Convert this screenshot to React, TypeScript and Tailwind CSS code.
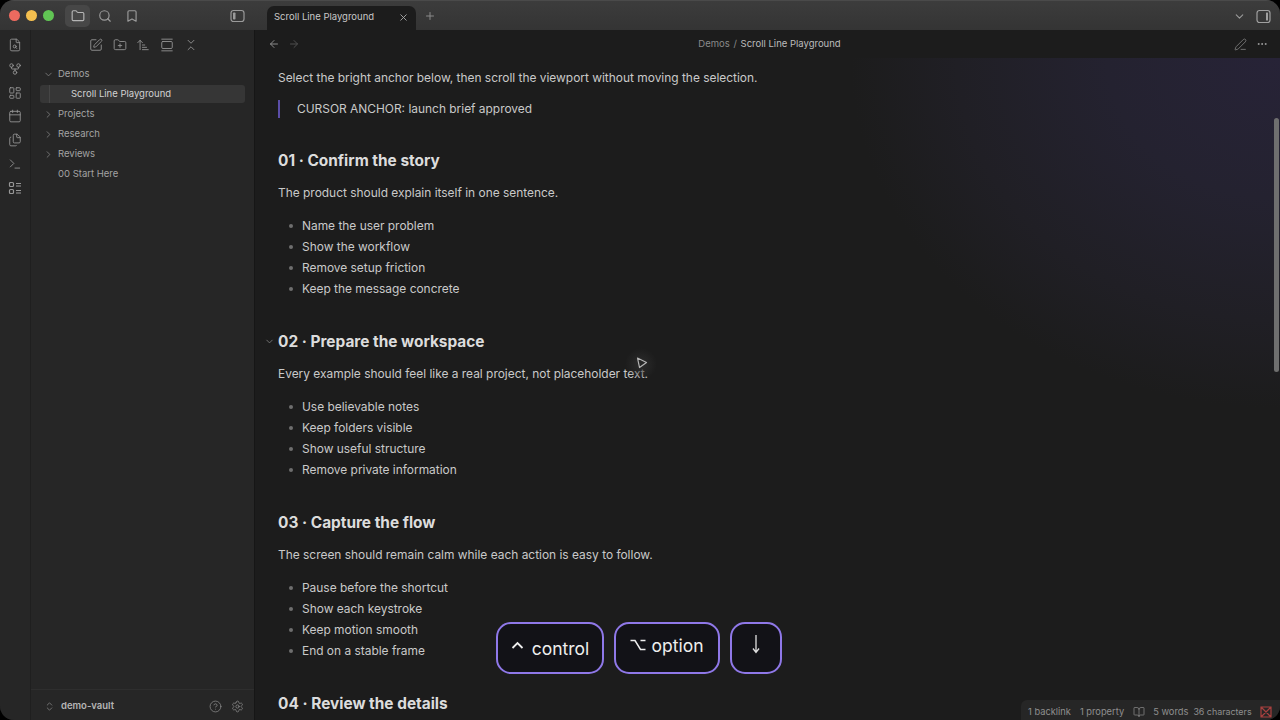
import React from "react";
import {
  FileSearch, GitFork, LayoutDashboard, Calendar, Files, Terminal, Folder, Search, Bookmark,
  SquarePen, FolderPlus, ArrowUpNarrowWide, GalleryVertical, ChevronsDownUp, ChevronDown, ChevronRight,
  ChevronsUpDown, CircleHelp, Settings, X, Plus, ArrowLeft, ArrowRight, PenLine, Ellipsis, BookOpen,
} from "lucide-react";

function Section({ title, intro, items, fold }: { title: string; intro: string; items: string[]; fold?: boolean }) {
  return (
    <div className="mb-[30.5px]">
      <div className="relative h-[24px] flex items-center text-[15.4px] font-bold text-[#dcdcdc]">
        {fold && <ChevronDown size={11} className="absolute left-[-14px] top-[6px] text-[#777]" />}
        {title}
      </div>
      <div className="mt-[8px] h-[24px] flex items-center">{intro}</div>
      <ul className="mt-[10.5px]">
        {items.map((t) => (
          <li key={t} className="h-[21px] flex items-center">
            <span className="ml-[11px] mr-[9px] w-[4px] h-[4px] rounded-full bg-[#6e6e6e]" />
            {t}
          </li>
        ))}
      </ul>
    </div>
  );
}

function Tree({ label, open }: { label: string; open?: boolean }) {
  return (
    <div className="h-[20px] flex items-center pl-[12px] text-[#a3a3a3]">
      {open ? <ChevronDown size={11} className="text-[#777]" /> : <ChevronRight size={11} className="text-[#777]" />}
      <span className="ml-[4px]">{label}</span>
    </div>
  );
}

function Key({ children, w }: { children: React.ReactNode; w: string }) {
  return (
    <div className={`${w} h-[52px] rounded-[15px] border-2 border-[#8f78e8] bg-[#121217] flex items-center justify-center text-[#eeeeee] text-[17.5px]`}>
      {children}
    </div>
  );
}

export default function App() {
  return (
    <div className="w-[1280px] h-[720px] overflow-hidden bg-black" style={{ fontFamily: "Inter, 'Liberation Sans', sans-serif" }}>
      <div className="w-full h-full rounded-[14px] overflow-hidden flex flex-col bg-[#1c1c1c] relative">
        {/* Title bar */}
        <div className="h-[30px] shrink-0 flex bg-gradient-to-b from-[#3c3c3c] to-[#343434] border-t border-[#4a4a4a]">
          <div className="w-[255px] shrink-0 flex items-center">
            <span className="ml-[9px] w-[11px] h-[11px] rounded-full bg-[#ec6a5f]" />
            <span className="ml-[6px] w-[11px] h-[11px] rounded-full bg-[#f4bf4f]" />
            <span className="ml-[6px] w-[11px] h-[11px] rounded-full bg-[#61c554]" />
            <div className="ml-[11px] w-[25px] h-[22px] rounded-[5px] bg-[#474747] flex items-center justify-center text-[#b5b5b5]"><Folder size={14} /></div>
            <Search size={14} className="ml-[8px] text-[#9a9a9a]" />
            <Bookmark size={14} className="ml-[13px] text-[#9a9a9a]" />
            <svg width="15" height="14" viewBox="0 0 15 14" className="ml-[91px] text-[#9a9a9a]" fill="none" stroke="currentColor" strokeWidth="1.2">
              <rect x="1" y="1.5" width="13" height="11" rx="2.5" />
              <rect x="3" y="3.5" width="2.5" height="7" rx="0.8" fill="currentColor" stroke="none" />
            </svg>
          </div>
          <div className="flex-1 flex items-end pl-[12px]">
            <div className="w-[149px] h-[24px] rounded-t-[7px] bg-[#1c1c1c] flex items-center pl-[7px] pb-[2px] text-[9.5px] text-[#c8c8c8]">
              <span className="flex-1">Scroll Line Playground</span>
              <X size={11} className="mr-[7px] text-[#a8a8a8]" />
            </div>
            <div className="ml-[8px] h-[28px] flex items-center"><Plus size={12} className="text-[#8a8a8a]" /></div>
            <div className="flex-1" />
            <div className="h-[28px] flex items-center">
              <ChevronDown size={13} className="text-[#9a9a9a]" />
              <svg width="15" height="15" viewBox="0 0 15 15" className="ml-[10px] mr-[9px] text-[#a0a0a0]" fill="none" stroke="currentColor" strokeWidth="1.2">
                <rect x="1" y="1.5" width="13" height="12" rx="2.5" />
                <rect x="10" y="3.5" width="2" height="8" rx="0.6" fill="currentColor" stroke="none" />
              </svg>
            </div>
          </div>
        </div>

        <div className="flex-1 flex min-h-0">
          {/* Ribbon */}
          <div className="w-[31px] shrink-0 bg-[#262626] border-r border-[#1f1f1f] flex flex-col items-center pt-[8px] gap-[9.75px] text-[#979797]">
            {[FileSearch, GitFork, LayoutDashboard, Calendar, Files, Terminal].map((I, i) => (
              <I key={i} size={14} strokeWidth={1.5} />
            ))}
            <svg width="14" height="14" viewBox="0 0 14 14" fill="none" stroke="currentColor" strokeWidth="1.2">
              <rect x="1.5" y="1.5" width="4" height="4" rx="1" />
              <rect x="1.5" y="8.5" width="4" height="4" rx="1" />
              <path d="M8 2.5 H13 M8 5 H13 M8 9.5 H13 M8 12 H13" />
            </svg>
          </div>
          {/* Sidebar */}
          <div className="w-[224px] shrink-0 bg-[#262626] border-r border-[#161616] flex flex-col text-[9.5px]">
            <div className="h-[30px] flex items-center pl-[58px] gap-[9.7px] text-[#979797]">
              <SquarePen size={14} strokeWidth={1.5} />
              <FolderPlus size={14} strokeWidth={1.5} />
              <ArrowUpNarrowWide size={14} strokeWidth={1.5} />
              <GalleryVertical size={14} strokeWidth={1.5} />
              <ChevronsDownUp size={14} strokeWidth={1.5} />
            </div>
            <div className="pt-[4px] flex-1">
              <Tree label="Demos" open />
              <div className="ml-[9px] mr-[9px] h-[18px] my-[1px] rounded-[3px] bg-[#363636] flex items-center pl-[31px] text-[#d2d2d2] relative">
                <span className="absolute left-[9px] top-0 bottom-0 w-px bg-[#454545]" />
                Scroll Line Playground
              </div>
              <Tree label="Projects" />
              <Tree label="Research" />
              <Tree label="Reviews" />
              <div className="h-[20px] flex items-center pl-[27px] text-[#a3a3a3]">00 Start Here</div>
            </div>
            <div className="h-[31px] border-t border-[#2e2e2e] flex items-center pl-[13px] pt-[3px] text-[#b5b5b5]">
              <ChevronsUpDown size={11} className="text-[#777]" />
              <span className="ml-[6px] font-semibold flex-1">demo-vault</span>
              <CircleHelp size={13} strokeWidth={1.4} className="text-[#8c8c8c]" />
              <Settings size={13} strokeWidth={1.4} className="ml-[9px] mr-[10px] text-[#8c8c8c]" />
            </div>
          </div>
          {/* Main */}
          <div className="flex-1 flex flex-col min-w-0 relative">
            <div className="h-[28px] shrink-0 bg-[#1c1c1c] flex items-center pl-[13px] pr-[12px] relative">
              <ArrowLeft size={12} className="text-[#8a8a8a]" />
              <ArrowRight size={12} className="ml-[8px] text-[#4f4f4f]" />
              <div className="flex-1 text-center text-[9.5px] text-[#8a8a8a] pl-[5px]">
                Demos <span className="mx-[1px]">/</span> <span className="text-[#bcbcbc]">Scroll Line Playground</span>
              </div>
              <PenLine size={13} className="text-[#8a8a8a]" strokeWidth={1.4} />
              <Ellipsis size={12} className="ml-[9px] text-[#a0a0a0]" />
            </div>
            <div
              className="flex-1 min-h-0 overflow-hidden pl-[23px] pt-[8px] text-[11.93px] text-[#c9c9c9]"
              style={{ background: "radial-gradient(ellipse 430px 350px at 100% 0%, #272337 0%, #242230 40%, #201f25 75%, #1c1c1c 100%)" }}
            >
              <div className="h-[24px] flex items-center">Select the bright anchor below, then scroll the viewport without moving the selection.</div>
              <div className="mt-[7px] h-[24px] flex items-center">
                <span className="w-[2px] h-[18px] bg-[#5b4ea8] mr-[17px]" />
                CURSOR ANCHOR: launch brief approved
              </div>
              <div className="mt-[28px]">
                <Section title="01 · Confirm the story" intro="The product should explain itself in one sentence." items={["Name the user problem", "Show the workflow", "Remove setup friction", "Keep the message concrete"]} />
                <Section fold title="02 · Prepare the workspace" intro="Every example should feel like a real project, not placeholder text." items={["Use believable notes", "Keep folders visible", "Show useful structure", "Remove private information"]} />
                <Section title="03 · Capture the flow" intro="The screen should remain calm while each action is easy to follow." items={["Pause before the shortcut", "Show each keystroke", "Keep motion smooth", "End on a stable frame"]} />
                <Section title="04 · Review the details" intro="" items={[]} />
              </div>
            </div>
            {/* Scrollbar */}
            <div className="absolute right-[1px] top-[88px] w-[5px] h-[254px] rounded-full bg-[#6f6f6f]" />
            {/* Cursor */}
            <div className="absolute left-[370px] top-[318px] w-[32px] h-[32px] rounded-full" style={{ background: "radial-gradient(circle, #2c2c2c 0%, #1c1c1c00 70%)" }} />
            <svg width="12" height="12" viewBox="0 0 12 12" className="absolute left-[381px] top-[327px]" fill="#262626" stroke="#b5b5b5" strokeWidth="1.2" strokeLinejoin="round">
              <path d="M1.5 1 L10.5 5.5 L3.5 10.5 Z" />
            </svg>
            {/* Keys */}
            <div className="absolute left-[241px] top-[592px] flex gap-[10px]">
              <Key w="w-[108px]">
                <svg width="13" height="8" viewBox="0 0 13 8" fill="none" stroke="#eeeeee" strokeWidth="1.8" className="mr-[8px] mb-[6px]"><path d="M1.5 7 L6.5 2 L11.5 7" /></svg>
                <span className="mt-[2px]">control</span>
              </Key>
              <Key w="w-[106px]">
                <span className="flex items-center mb-[4px]">
                  <svg width="16" height="12" viewBox="0 0 16 12" fill="none" stroke="#eeeeee" strokeWidth="1.5" className="mr-[5px] mb-[2px]"><path d="M0.5 1.5 H5 L10.5 10.5 H15.5 M10.5 1.5 H15.5" /></svg>
                  option
                </span>
              </Key>
              <Key w="w-[52px]"><svg width="10" height="20" viewBox="0 0 10 20" fill="none" stroke="#e0e0e0" strokeWidth="1.3" className="mb-[8px]"><path d="M5 1 V18 M2 14.5 L5 18.5 L8 14.5" /></svg></Key>
            </div>
            {/* Status bar */}
            <div className="absolute right-0 bottom-0 h-[20px] w-[259px] rounded-tl-[6px] bg-[#262626] flex items-center pl-[7px] pt-[4px] text-[9.3px] text-[#8f8f8f]">
              <span>1 backlink</span>
              <span className="ml-[9px]">1 property</span>
              <BookOpen size={12} strokeWidth={1.4} className="ml-[9px]" />
              <span className="ml-[8px]">5 words</span>
              <span className="ml-[5px] text-[8.9px]">36 characters</span>
              <svg width="12" height="12" viewBox="0 0 12 12" fill="none" stroke="#a8403f" strokeWidth="1.2" className="ml-[8px]">
                <path d="M1 1 H11 V11 H1 Z M1 1 L11 11 M11 1 L1 11" />
              </svg>
            </div>
          </div>
        </div>
      </div>
    </div>
  );
}
